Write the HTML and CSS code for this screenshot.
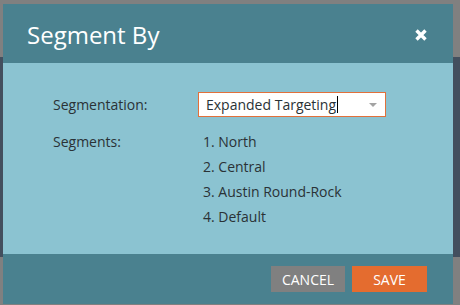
FILE: index.html
```html
<!DOCTYPE html>
<html lang="en">
<head>
    <meta charset="UTF-8">
    <title>Segment By</title>
    <link rel="stylesheet" href="styles.css">
</head>
<body>
    <div class="modal">
        <!-- header -->
        <div class="modal-header">
            <h1>Segment By</h1>
            <button class="close-button" aria-label="Close">
                <svg width="12" height="12" viewBox="0 0 12 12">
                    <path d="M1.5 1.5 L10.5 10.5 M10.5 1.5 L1.5 10.5" stroke="#fff" stroke-width="3.4" fill="none"/>
                </svg>
            </button>
        </div>

        <!-- body -->
        <div class="modal-body">
            <div class="form-row">
                <label for="segmentation">Segmentation:</label>
                <div class="select-box" id="segmentation">
                    <span class="select-text">Expanded Targeting</span><span class="text-cursor"></span>
                    <span class="select-arrow"></span>
                </div>
            </div>
            <div class="form-row segments-row">
                <label>Segments:</label>
                <ol class="segment-list">
                    <li>1. North</li>
                    <li>2. Central</li>
                    <li>3. Austin Round-Rock</li>
                    <li>4. Default</li>
                </ol>
            </div>
        </div>

        <!-- footer -->
        <div class="modal-footer">
            <button class="btn btn-cancel">CANCEL</button>
            <button class="btn btn-save">SAVE</button>
        </div>
    </div>
</body>
</html>
```

FILE: styles.css
```css
html, body {
    margin: 0;
    padding: 0;
}
body {
    font-family: "Open Sans", "Liberation Sans", sans-serif;
    background: linear-gradient(to bottom, #808080 57px, #434f5e 57px, #434f5e 257px, #808080 257px);
    height: 305px;
    overflow: hidden;
}
.modal {
    width: 450px;
    margin: 4px 0 0 3px;
}
.modal-header {
    height: 57px;
    padding: 2px 24px 0 24px;
    background-color: #4a818f;
    display: flex;
    align-items: center;
    justify-content: space-between;
}
.modal-header h1 {
    margin: 0;
    font-size: 24px;
    font-weight: 400;
    line-height: 57px;
    color: #fff;
}
.close-button {
    background: none;
    border: none;
    padding: 0;
    margin-right: 2px;
    width: 12px;
    height: 12px;
    display: flex;
}
.modal-body {
    height: 162px;
    padding: 29px 0 0 50px;
    background-color: #8bc3d1;
    color: #2a3236;
    font-size: 14px;
}
.form-row {
    display: flex;
    align-items: center;
}
.form-row label {
    width: 145px;
    line-height: 25px;
}
.select-box {
    position: relative;
    box-sizing: border-box;
    width: 188px;
    height: 25px;
    padding-left: 7px;
    background-color: #fff;
    border: 1px solid #e2703a;
    line-height: 23px;
    display: flex;
    align-items: center;
}
.text-cursor {
    width: 1px;
    height: 17px;
    background-color: #000;
    margin-left: 1px;
}
.select-arrow {
    position: absolute;
    right: 8px;
    top: 10px;
    border-left: 4px solid transparent;
    border-right: 4px solid transparent;
    border-top: 4px solid #a3a3a3;
}
.segments-row {
    align-items: flex-start;
    margin-top: 12px;
}
.segment-list {
    list-style: none;
    margin: 0;
    padding: 0 0 0 5px;
}
.segment-list li {
    line-height: 25px;
}
.modal-footer {
    height: 50px;
    box-sizing: border-box;
    padding: 12px 26px 0 0;
    background-color: #4a818f;
    display: flex;
    justify-content: flex-end;
    gap: 7px;
}
.btn {
    height: 26px;
    border: none;
    padding: 0;
    font-family: "Open Sans", "Liberation Sans", sans-serif;
    font-size: 14px;
    color: #fff;
    cursor: pointer;
}
.btn-cancel {
    width: 74px;
    background-color: #808080;
}
.btn-save {
    width: 75px;
    background-color: #e46c2f;
}
```
